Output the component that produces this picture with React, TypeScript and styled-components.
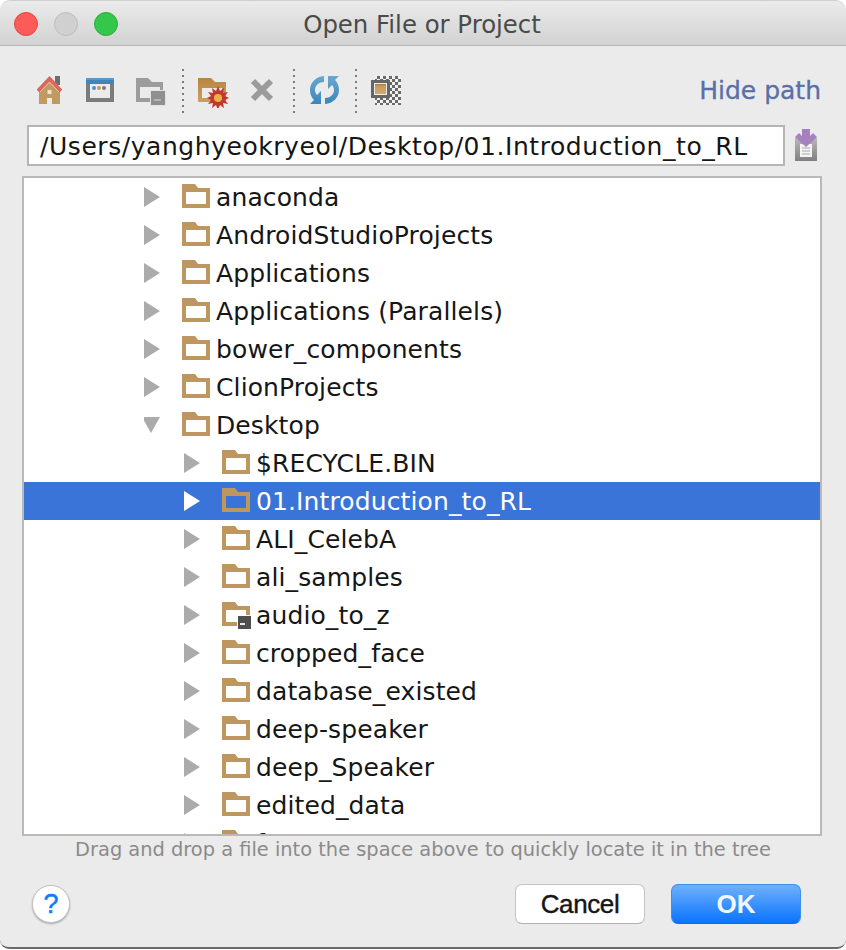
import React from "react";
import styled, { createGlobalStyle } from "styled-components";

const GlobalStyle = createGlobalStyle`
  html, body {
    margin: 0;
    padding: 0;
    background: #fff;
  }
`;

const Window = styled.div`
  width: 846px;
  height: 949px;
  box-sizing: border-box;
  background: #ebebeb;
  border-radius: 11px 11px 9px 9px;
  border-top: 1px solid #cfcfcf;
  border-bottom: 2px solid #6a6a6a;
  font-family: "DejaVu Sans", Verdana, sans-serif;
  overflow: hidden;
  display: flex;
  flex-direction: column;
`;

const TitleBar = styled.div`
  height: 44px;
  flex: none;
  display: flex;
  align-items: center;
  justify-content: center;
  position: relative;
  background: linear-gradient(#ebebeb, #d2d2d2);
  border-bottom: 1px solid #b4b4b4;
`;

const Title = styled.div`
  font-size: 24.4px;
  line-height: 30px;
  padding-top: 4px;
  margin-left: -2px;
  color: #4a4a4a;
`;

const Lights = styled.div`
  position: absolute;
  left: 14px;
  top: 11px;
  display: flex;
  gap: 16px;
`;

const Light = styled.span<{ $fill: string; $edge: string }>`
  width: 24px;
  height: 24px;
  box-sizing: border-box;
  border-radius: 50%;
  background: ${({ $fill }) => $fill};
  border: 1px solid ${({ $edge }) => $edge};
`;

const Toolbar = styled.div`
  height: 79px;
  flex: none;
  box-sizing: border-box;
  padding: 23px 25px 0 37px;
  display: flex;
  align-items: flex-start;
`;

const ToolIcon = styled.svg<{ $left: number; $top: number }>`
  display: block;
  flex: none;
  margin-left: ${({ $left }) => $left}px;
  margin-top: ${({ $top }) => $top}px;
`;

const Divider = styled.span<{ $left: number }>`
  width: 2px;
  height: 44px;
  flex: none;
  margin-left: ${({ $left }) => $left}px;
  background: repeating-linear-gradient(#7c7c7c 0 2px, transparent 2px 6px);
`;

const HidePath = styled.a`
  margin-left: auto;
  margin-top: 7px;
  font-size: 25px;
  line-height: 30px;
  color: #5a6ea8;
  -webkit-text-stroke: 0.3px #5a6ea8;
`;

const PathRow = styled.div`
  flex: none;
  display: flex;
  align-items: center;
  padding-left: 27px;
  height: 41px;
`;

const PathInput = styled.div`
  width: 758px;
  height: 41px;
  box-sizing: border-box;
  background: #fff;
  border: 2px solid #b5b5b5;
  padding-left: 11px;
  font-size: 25px;
  letter-spacing: 0.55px;
  line-height: 40px;
  color: #151515;
  white-space: nowrap;
`;

const PathButton = styled.svg`
  display: block;
  flex: none;
  margin-left: 10px;
`;

const Tree = styled.div`
  flex: none;
  width: 800px;
  height: 660px;
  box-sizing: border-box;
  margin: 10px 0 0 22px;
  border: 2px solid #b9b9b9;
  background: #fff;
  overflow: hidden;
`;

const Row = styled.div<{ $depth: number; $selected?: boolean }>`
  height: 38px;
  display: flex;
  align-items: center;
  padding-left: ${({ $depth }) => 80 + $depth * 40}px;
  background: ${({ $selected }) => ($selected ? "#3a74d8" : "transparent")};
  color: ${({ $selected }) => ($selected ? "#fff" : "#161616")};
`;

const Arrow = styled.svg`
  display: block;
  flex: none;
  margin-right: 22px;
`;

const FolderIcon = styled.svg`
  display: block;
  flex: none;
  margin-top: 2px;
`;

const Label = styled.span`
  margin-left: 4px;
  padding-top: 2px;
  font-size: 25px;
  letter-spacing: 0.12px;
  line-height: 36px;
  white-space: nowrap;
`;

const Hint = styled.div`
  flex: none;
  height: 28px;
  text-align: center;
  font-size: 19.4px;
  line-height: 28px;
  color: #8a8a8a;
`;

const Footer = styled.div`
  flex: none;
  display: flex;
  align-items: center;
  padding: 20px 45px 0 32px;
`;

const HelpButton = styled.button`
  width: 38px;
  height: 38px;
  padding: 0;
  border-radius: 50%;
  border: 1px solid #c4c4c4;
  background: #fff;
  box-shadow: 0 1px 2px rgba(0, 0, 0, 0.3);
  color: #0a7cff;
  font-family: "Liberation Sans", Arial, sans-serif;
  font-size: 27px;
  line-height: 36px;
  -webkit-text-stroke: 0.5px #0a7cff;
`;

const Buttons = styled.div`
  margin-left: auto;
  display: flex;
  gap: 26px;
`;

const DialogButton = styled.button<{ $primary?: boolean }>`
  width: 130px;
  height: 40px;
  padding: 0;
  box-sizing: border-box;
  border-radius: 7px;
  font-family: "Liberation Sans", Arial, sans-serif;
  font-size: 26px;
  line-height: 38px;
  border: 1px solid ${({ $primary }) => ($primary ? "#3d8fef" : "#c4c4c4")};
  border-bottom-color: ${({ $primary }) => ($primary ? "#0a6cf0" : "#b0b0b0")};
  background: ${({ $primary }) =>
    $primary ? "linear-gradient(#6fb0fb, #0a74ff)" : "#fff"};
  color: ${({ $primary }) => ($primary ? "#f2f6ff" : "#151515")};
  font-weight: ${({ $primary }) => ($primary ? 700 : 400)};
  -webkit-text-stroke: ${({ $primary }) => ($primary ? "0" : "0.4px #151515")};
  letter-spacing: ${({ $primary }) => ($primary ? "0" : "-0.4px")};
`;

const Home = () => (
  <ToolIcon $left={0} $top={7} width="25" height="28" viewBox="0 0 25 28">
    <rect x="18" y="0" width="5" height="9" fill="#6e6e6e" />
    <path d="M2 14 12.500 4 23 14v14h-8v-6h-5v6H2z" fill="#c09a60" />
    <path d="M1 15 12.500 3 24 15" fill="none" stroke="#d9675c" strokeWidth="4" />
    <path d="M3 16 12.500 6 22 16" fill="none" stroke="#e9c9b8" strokeWidth="1" />
    <rect x="10.500" y="14" width="4" height="4" fill="#f0e4cf" />
  </ToolIcon>
);

const Browser = () => (
  <ToolIcon $left={24} $top={9} width="28" height="24" viewBox="0 0 28 24">
    <rect width="28" height="24" fill="#7b7b7b" />
    <rect x="4" y="6" width="20" height="14" fill="#ebebeb" />
    <rect width="28" height="6" fill="#3f85b9" />
    <rect width="28" height="2" fill="#5b9ac6" />
    <circle cx="8" cy="10" r="2" fill="#4592cf" />
    <circle cx="13" cy="10" r="2" fill="#c99a5c" />
    <circle cx="18" cy="10" r="2" fill="#7b7b7b" />
  </ToolIcon>
);

const GrayFolder = () => (
  <ToolIcon $left={22} $top={9} width="30" height="28" viewBox="0 0 30 28">
    <path
      fill="#9c9c9c"
      fillRule="evenodd"
      d="M0 0h12l4 4h11v20H0zM4 9v11h20V9z"
    />
    <rect x="14.500" y="12.500" width="15" height="15" fill="#8f8f8f" stroke="#e2e2e2" />
    <rect x="18" y="21" width="7" height="2" fill="#b4b4b4" />
  </ToolIcon>
);

const NewFolder = () => (
  <ToolIcon $left={14} $top={9} width="31" height="30" viewBox="0 0 31 30">
    <defs>
      <linearGradient id="brown" x1="0" y1="0" x2="0" y2="1">
        <stop offset="0" stopColor="#b8853d" />
        <stop offset="1" stopColor="#c9a066" />
      </linearGradient>
    </defs>
    <path
      fill="url(#brown)"
      fillRule="evenodd"
      d="M0 0h13l4 4h11v20H0zM4 10v10h20V10z"
    />
    <path
      fill="#c0392f"
      d="M20 8l2 5 4-3-1 5 5-1-3 4 4 2-4 2 3 4-5-1 1 5-4-3-2 5-2-5-4 3 1-5-5 1 3-4-4-2 4-2-3-4 5 1-1-5 4 3z"
    />
    <circle cx="20" cy="20" r="4" fill="#eeb046" />
  </ToolIcon>
);

const Cross = () => (
  <ToolIcon $left={21} $top={9} width="24" height="24" viewBox="0 0 24 24">
    <path d="M3 3l18 18M21 3 3 21" stroke="#9b9b9b" strokeWidth="6" fill="none" />
  </ToolIcon>
);

const Refresh = () => (
  <ToolIcon $left={15} $top={7} width="29" height="28" viewBox="0 0 29 28">
    <defs>
      <linearGradient id="blue" x1="0" y1="0" x2="0" y2="1">
        <stop offset="0" stopColor="#6aa8cf" />
        <stop offset="1" stopColor="#3a86bb" />
      </linearGradient>
    </defs>
    <path
      fill="url(#blue)"
      d="M14 0v6C9 6 5 9.500 5 14c0 2 .8 3.800 2 5l4-4v13H0l4-4C1.500 21.500 0 18 0 14 0 6.500 6 .5 14 0z"
    />
    <path
      fill="url(#blue)"
      d="M15 28v-6c5 0 9-3.500 9-8 0-2-.8-3.800-2-5l-4 4V0h11l-4 4c2.500 2.500 4 6 4 10 0 7.500-6 13.500-14 14z"
    />
  </ToolIcon>
);

const Checker = () => (
  <ToolIcon $left={14} $top={7} width="30" height="29" viewBox="0 0 30 29">
    <defs>
      <pattern id="check" width="6" height="6" patternUnits="userSpaceOnUse">
        <rect width="6" height="6" fill="#f2f2f2" />
        <rect width="3" height="3" fill="#6a6a6a" />
        <rect x="3" y="3" width="3" height="3" fill="#6a6a6a" />
      </pattern>
      <linearGradient id="tan" x1="0" y1="0" x2="0" y2="1">
        <stop offset="0" stopColor="#a87840" />
        <stop offset="0.2" stopColor="#c99a5c" />
        <stop offset="1" stopColor="#d2aa70" />
      </linearGradient>
    </defs>
    <rect x="4" width="26" height="29" fill="url(#check)" />
    <rect x="1.500" y="5.500" width="16" height="15" fill="#ededed" stroke="#666" strokeWidth="3" />
    <rect x="4" y="8" width="11" height="10" fill="url(#tan)" />
  </ToolIcon>
);

const PathDownload = () => (
  <PathButton width="23" height="33" viewBox="0 0 23 33">
    <defs>
      <linearGradient id="clip" x1="0" y1="0" x2="0" y2="1">
        <stop offset="0" stopColor="#b8b8b8" />
        <stop offset="1" stopColor="#808080" />
      </linearGradient>
    </defs>
    <rect y="9" width="22" height="23" fill="url(#clip)" />
    <rect x="5" y="15" width="12" height="13" fill="#f4f4f4" />
    <path d="M7 19h8M7 22h8M7 25h8" stroke="#a8a8a8" />
    <path d="M7 0h8v7l3-3 4 4-11 10L0 8l4-4 3 3z" fill="#a780bf" />
  </PathButton>
);

const Folder: React.FC<{ selected?: boolean; locked?: boolean }> = ({ selected, locked }) => (
  <FolderIcon width="30" height="28" viewBox="0 0 30 28">
    <path fill="#bd9660" d="M0 0h13l3 4h12v20H0z" />
    <rect x="4" y="8" width="20" height="12" fill={selected ? "#3a74d8" : "#fff"} />
    {locked && (
      <>
        <rect x="15.500" y="13.500" width="14" height="14" fill="#4e4e4e" stroke="#fff" />
        <rect x="18" y="21" width="5" height="2" fill="#e6e6e6" />
      </>
    )}
  </FolderIcon>
);

interface Item {
  name: string;
  depth: number;
  open?: boolean;
  selected?: boolean;
  locked?: boolean;
}

const items: Item[] = [
  { name: "anaconda", depth: 1 },
  { name: "AndroidStudioProjects", depth: 1 },
  { name: "Applications", depth: 1 },
  { name: "Applications (Parallels)", depth: 1 },
  { name: "bower_components", depth: 1 },
  { name: "ClionProjects", depth: 1 },
  { name: "Desktop", depth: 1, open: true },
  { name: "$RECYCLE.BIN", depth: 2 },
  { name: "01.Introduction_to_RL", depth: 2, selected: true },
  { name: "ALI_CelebA", depth: 2 },
  { name: "ali_samples", depth: 2 },
  { name: "audio_to_z", depth: 2, locked: true },
  { name: "cropped_face", depth: 2 },
  { name: "database_existed", depth: 2 },
  { name: "deep-speaker", depth: 2 },
  { name: "deep_Speaker", depth: 2 },
  { name: "edited_data", depth: 2 },
  { name: "faces", depth: 2 },
];

const TreeRow: React.FC<{ item: Item }> = ({ item }) => (
  <Row $depth={item.depth} $selected={item.selected}>
    <Arrow width="16" height="20" viewBox="0 0 16 20">
      {item.open ? (
        <path d="M-2 2h18L7 18z" fill="#ababab" />
      ) : (
        <path d="M0 0l16 10L0 20z" fill={item.selected ? "#fff" : "#ababab"} />
      )}
    </Arrow>
    <Folder selected={item.selected} locked={item.locked} />
    <Label>{item.name}</Label>
  </Row>
);

export default function App() {
  return (
    <>
      <GlobalStyle />
      <Window>
        <TitleBar>
          <Lights>
            <Light $fill="#fc5b57" $edge="#e5443f" />
            <Light $fill="#d0d0d0" $edge="#bdbdbd" />
            <Light $fill="#34c84a" $edge="#2bac3d" />
          </Lights>
          <Title>Open File or Project</Title>
        </TitleBar>
        <Toolbar>
          <Home />
          <Browser />
          <GrayFolder />
          <Divider $left={16} />
          <NewFolder />
          <Cross />
          <Divider $left={19} />
          <Refresh />
          <Divider $left={16} />
          <Checker />
          <HidePath>Hide path</HidePath>
        </Toolbar>
        <PathRow>
          <PathInput>/Users/yanghyeokryeol/Desktop/01.Introduction_to_RL</PathInput>
          <PathDownload />
        </PathRow>
        <Tree>
          {items.map((item) => (
            <TreeRow key={item.name} item={item} />
          ))}
        </Tree>
        <Hint>Drag and drop a file into the space above to quickly locate it in the tree</Hint>
        <Footer>
          <HelpButton>?</HelpButton>
          <Buttons>
            <DialogButton>Cancel</DialogButton>
            <DialogButton $primary>OK</DialogButton>
          </Buttons>
        </Footer>
      </Window>
    </>
  );
}
